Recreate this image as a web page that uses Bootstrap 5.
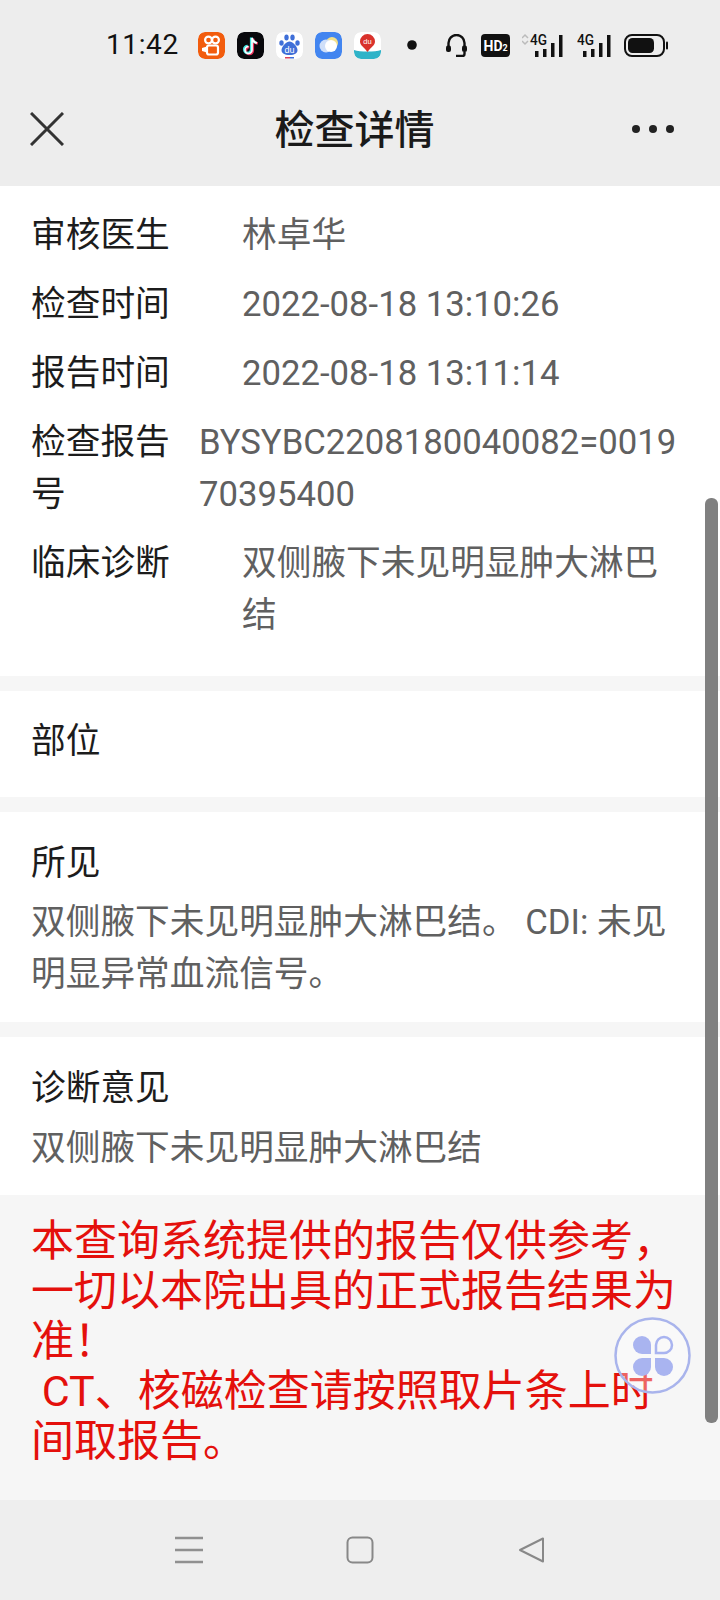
<!DOCTYPE html>
<html lang="zh-CN">
<head>
  <meta charset="UTF-8">
  <title>检查详情</title>
  <link href="https://cdn.jsdelivr.net/npm/bootstrap@5.3.0/dist/css/bootstrap.min.css" rel="stylesheet">
  <style>
    html, body { height: 1600px; overflow: hidden; }
    body {
      background: #f6f6f6;
      font-family: Roboto, "Noto Sans CJK SC", sans-serif;
      position: relative;
    }
    .top-area { background: #ededed; height: 186px; }
    .status-bar { height: 90px; padding-left: 106px; color: #111; }
    .status-time { font-size: 28px; width: 92px; letter-spacing: .6px; }
    .app-icon { width: 27px; height: 27px; border-radius: 7px; margin-right: 12px; flex: none; display: block; }
    .title-bar { height: 78px; padding: 0 45px 0 30px; }
    .title-text { font-size: 40px; font-weight: 500; color: #1a1a1a; flex: 1; text-align: center; margin-left: 14px; padding-top: 3px; }
    .sect { background: #fff; padding: 0 32px 0 31px; font-size: 34.700px; line-height: 52px; color: #1c1c1c; }
    .info-list { padding-top: 14px; padding-bottom: 27px; }
    .info-row { display: flex; padding: 8.500px 0; }
    .info-row .lab { flex: none; width: 139px; }
    .info-row .val { color: #606060; margin-left: 72px; flex: 1; }
    .info-row .val.tight { margin-left: 29px; word-break: break-all; }
    .gray-txt { color: #606060; margin-top: 7px; }
    .gap-bar { height: 15px; background: #f6f6f6; }
    .part-sect { padding-top: 24px; padding-bottom: 30px; }
    .text-sect { padding-top: 25px; padding-bottom: 22px; }
    .text-sect.last-sect { padding-bottom: 21px; }
    .last-sect .gray-txt { margin-top: 8px; }
    .red-note { color: #e4100c; font-size: 43px; line-height: 50px; padding: 21px 32px 0 31px; background: #f6f6f6; height: 304px; }
    .nav-bottom { position: absolute; left: 0; right: 0; bottom: 0; height: 100px; background: #eeeeee; }
    .nav-ico { position: absolute; top: 36px; }
    .scroll-thumb { position: absolute; left: 705px; top: 498px; width: 13px; height: 925px; background: #808080; border-radius: 6px; }
    .float-btn { position: absolute; left: 614px; top: 1317px; width: 77px; height: 77px; }
    .st-dot { margin-left: 14px; }
    .st-head { margin-left: 29px; }
    .st-hd { margin-left: 14px; }
    .st-sig1 { margin-left: 12px; }
    .st-sig2 { margin-left: 14px; }
    .st-bat { margin-left: 13px; }
  </style>
</head>
<body>
  <div class="top-area">
    <div class="status-bar d-flex align-items-center">
      <div class="status-time">11:42</div>
      <svg class="app-icon" viewBox="0 0 27 27"><rect width="27" height="27" rx="7" fill="#f25c0d"/><circle cx="10.500" cy="8" r="3.400" fill="none" stroke="#fff" stroke-width="2.200"/><circle cx="17.500" cy="8" r="3.400" fill="none" stroke="#fff" stroke-width="2.200"/><rect x="9" y="13.500" width="11" height="9" rx="2" fill="none" stroke="#fff" stroke-width="2.200"/><path d="M4 16l5-1.500v6L4 19z" fill="#fff"/></svg>
      <svg class="app-icon" viewBox="0 0 27 27"><rect width="27" height="27" rx="7" fill="#08080c"/><path d="M15 6v12a3.500 3.500 0 1 1-3.500-3.500M15 6c.5 3 2.500 4.500 5 5" fill="none" stroke="#ee2f5a" stroke-width="2.600" transform="translate(.8 .5)"/><path d="M15 6v12a3.500 3.500 0 1 1-3.500-3.500M15 6c.5 3 2.500 4.500 5 5" fill="none" stroke="#3fe3e0" stroke-width="2.600" transform="translate(-.8 -.5)"/><path d="M15 6v12a3.500 3.500 0 1 1-3.500-3.500M15 6c.5 3 2.500 4.500 5 5" fill="none" stroke="#fff" stroke-width="1.600"/></svg>
      <svg class="app-icon" viewBox="0 0 27 27"><rect width="27" height="27" rx="7" fill="#fff"/><g fill="#3f6fd8"><ellipse cx="5.500" cy="11" rx="2.200" ry="2.800"/><ellipse cx="10.500" cy="5.500" rx="2.200" ry="3"/><ellipse cx="16.500" cy="5.500" rx="2.200" ry="3"/><ellipse cx="21.500" cy="11" rx="2.200" ry="2.800"/><path d="M13.500 9.500c3 0 8 5 8 8.500s-3 5-8 5-8-1.500-8-5 5-8.500 8-8.500z"/></g><rect x="9" y="25" width="5" height="1.500" fill="#d8405a"/><rect x="14" y="25" width="4" height="1.500" fill="#3f6fd8"/><text x="13.500" y="20.500" font-size="9" font-family="Liberation Sans" fill="#fff" text-anchor="middle">du</text></svg>
      <svg class="app-icon" viewBox="0 0 27 27"><rect width="27" height="27" rx="7" fill="#4285f0"/><circle cx="17" cy="11" r="6" fill="#f3e08a"/><circle cx="11" cy="14" r="6.500" fill="#cfdff9"/><circle cx="16" cy="14" r="6" fill="#fff"/></svg>
      <svg class="app-icon" viewBox="0 0 27 27"><rect width="27" height="27" rx="7" fill="#fff"/><path d="M0 18c6 2 21 2 27 0v2c0 4-3 7-7 7H7c-4 0-7-3-7-7z" fill="#2fb3c8"/><path d="M13.500 2a7.500 7.500 0 0 1 7.500 7.500c0 4-4.500 6-7.500 10.500C10.500 15.500 6 13.500 6 9.500A7.500 7.500 0 0 1 13.500 2z" fill="#d9322c"/><text x="13.500" y="11.500" font-size="7.500" font-family="Liberation Sans" fill="#fff" text-anchor="middle">du</text></svg>
      <svg class="st-dot" width="10" height="10" viewBox="0 0 10 10"><circle cx="5" cy="5" r="4.800" fill="#111"/></svg>
      <svg class="st-head" width="21" height="23" viewBox="0 0 21 23"><path d="M2.500 13v-4a8 8 0 0 1 16 0v4M18.500 18v2a2 2 0 0 1-2 2H10" fill="none" stroke="#111" stroke-width="2.400"/><rect x="0" y="11.500" width="5" height="6.500" rx="2" fill="#111"/><rect x="16" y="11.500" width="5" height="6.500" rx="2" fill="#111"/></svg>
      <svg class="st-hd" width="29" height="23" viewBox="0 0 29 23"><rect width="29" height="23" rx="4" fill="#111"/><text x="2.500" y="16.500" font-size="14" font-weight="700" fill="#fff">HD<tspan font-size="9">2</tspan></text></svg>
      <svg class="st-sig1" width="41" height="31" viewBox="0 -4 41 31"><path d="M0 4l3-3 3 3M0 7l3 3 3-3" fill="none" stroke="#bbb" stroke-width="1.500"/><text x="8" y="11" font-size="14" font-weight="500" fill="#111" textLength="17" lengthAdjust="spacingAndGlyphs">4G</text><rect x="13" y="17" width="3.500" height="6" fill="#111"/><rect x="21" y="15" width="3.500" height="8" fill="#111"/><rect x="29" y="9" width="3.500" height="14" fill="#111"/><rect x="37" y="1" width="3.500" height="22" fill="#111"/></svg>
      <svg class="st-sig2" width="34" height="31" viewBox="0 -4 34 31"><text x="0" y="11" font-size="14" font-weight="500" fill="#111" textLength="17" lengthAdjust="spacingAndGlyphs">4G</text><rect x="6" y="17" width="3.500" height="6" fill="#111"/><rect x="14" y="15" width="3.500" height="8" fill="#111"/><rect x="22" y="9" width="3.500" height="14" fill="#111"/><rect x="30" y="1" width="3.500" height="22" fill="#111"/></svg>
      <svg class="st-bat" width="44" height="23" viewBox="0 0 44 23"><rect x="1" y="1" width="39" height="21" rx="7" fill="none" stroke="#111" stroke-width="2"/><rect x="4" y="4" width="26" height="15" rx="4.500" fill="#111"/><rect x="42" y="7.500" width="2" height="8" rx="1" fill="#111"/></svg>
    </div>
    <div class="title-bar d-flex align-items-center">
      <svg width="34" height="34" viewBox="0 0 34 34"><path d="M1 1l32 32M33 1L1 33" stroke="#333" stroke-width="3" fill="none"/></svg>
      <div class="title-text">检查详情</div>
      <svg width="44" height="12" viewBox="0 0 44 12"><circle cx="5" cy="6" r="4" fill="#222"/><circle cx="22" cy="6" r="4" fill="#222"/><circle cx="39" cy="6" r="4" fill="#222"/></svg>
    </div>
  </div>

  <div class="sect info-list">
    <div class="info-row"><div class="lab">审核医生</div><div class="val">林卓华</div></div>
    <div class="info-row"><div class="lab">检查时间</div><div class="val">2022-08-18 13:10:26</div></div>
    <div class="info-row"><div class="lab">报告时间</div><div class="val">2022-08-18 13:11:14</div></div>
    <div class="info-row"><div class="lab">检查报告号</div><div class="val tight">BYSYBC2208180040082=001970395400</div></div>
    <div class="info-row"><div class="lab">临床诊断</div><div class="val">双侧腋下未见明显肿大淋巴结</div></div>
  </div>
  <div class="gap-bar"></div>
  <div class="sect part-sect">部位</div>
  <div class="gap-bar"></div>
  <div class="sect text-sect">
    <div>所见</div>
    <div class="gray-txt">双侧腋下未见明显肿大淋巴结。 CDI: 未见明显异常血流信号。</div>
  </div>
  <div class="gap-bar"></div>
  <div class="sect text-sect last-sect">
    <div>诊断意见</div>
    <div class="gray-txt">双侧腋下未见明显肿大淋巴结</div>
  </div>
  <div class="red-note">本查询系统提供的报告仅供参考，一切以本院出具的正式报告结果为准！<br>&nbsp;CT、核磁检查请按照取片条上时间取报告。</div>

  <div class="scroll-thumb"></div>
  <svg class="float-btn" viewBox="0 0 77 77"><circle cx="38.500" cy="38.500" r="37" fill="#fff" fill-opacity=".35" stroke="#a9b4ec" stroke-width="2.500"/><g fill="#a9b4f0"><path d="M37 37H28a9 9 0 1 1 9-9z"/><path d="M37 41v9a9 9 0 1 1-9-9z"/><path d="M41 41h9a9 9 0 1 1-9 9z"/></g><path d="M42 36h8a8 8 0 1 0-8-8z" fill="none" stroke="#a9b4f0" stroke-width="2.500"/></svg>
  <div class="nav-bottom">
    <svg class="nav-ico" style="left:175px" width="28" height="28" viewBox="0 0 28 28"><path d="M0 2h28M0 14h28M0 26h28" stroke="#909090" stroke-width="2.500"/></svg>
    <svg class="nav-ico" style="left:346px" width="28" height="28" viewBox="0 0 28 28"><rect x="1.500" y="1.500" width="25" height="25" rx="5" fill="none" stroke="#888" stroke-width="2"/></svg>
    <svg class="nav-ico" style="left:518px" width="28" height="28" viewBox="0 0 28 28"><path d="M25 2.500v23L2 14z" fill="none" stroke="#888" stroke-width="2" stroke-linejoin="round"/></svg>
  </div>
  <script src="https://cdn.jsdelivr.net/npm/bootstrap@5.3.0/dist/js/bootstrap.bundle.min.js"></script>
</body>
</html>
